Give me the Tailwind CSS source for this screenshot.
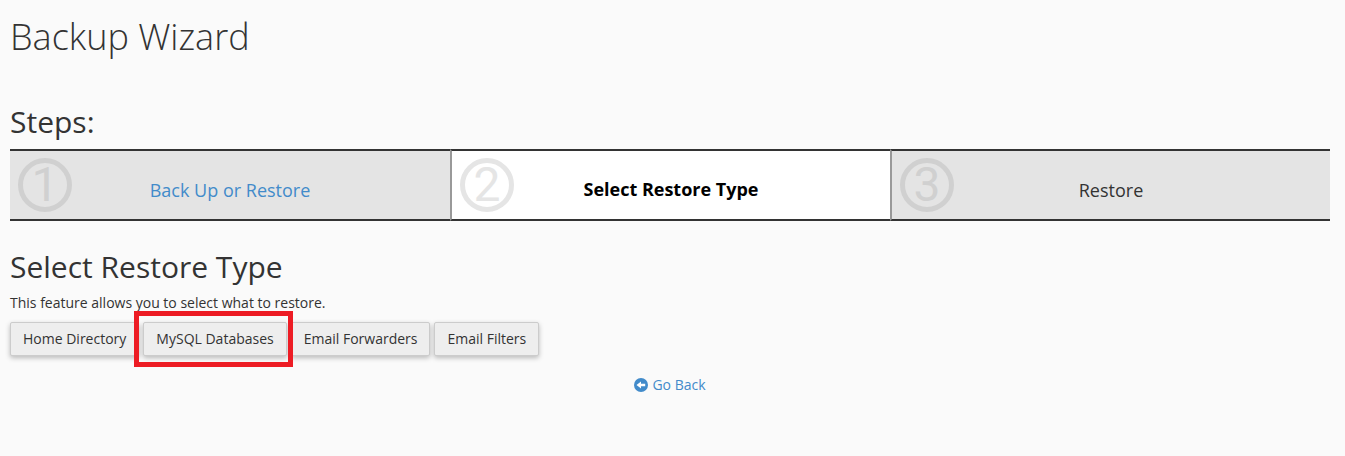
<!DOCTYPE html>
<html lang="en">
<head>
<meta charset="utf-8">
<meta name="viewport" content="width=device-width, initial-scale=1">
<title>Backup Wizard</title>
<script src="https://cdn.jsdelivr.net/npm/@tailwindcss/browser@4"></script>
</head>
<body class="min-h-screen bg-[#fafafa] pl-[10px] pr-[15px] pt-[17px] font-['Open_Sans',sans-serif] text-sm text-[#333]">
<main>
  <h1 class="text-[36px] leading-10 font-light">Backup Wizard</h1>

  <h2 class="mt-[47px] text-[30px] leading-9">Steps:</h2>
  <ol class="mt-[9px] grid grid-cols-3 text-lg leading-6">
    <li class="relative flex h-[72px] items-center justify-center border-y-2 border-[#333] bg-[#e4e4e4] pt-[10px]">
      <span aria-hidden="true" class="absolute left-2 top-[7px] flex size-[54px] items-center justify-center rounded-full border-5 border-[#d0d0d0] font-[Roboto,sans-serif] text-5xl text-[#d0d0d0]">1</span>
      <a href="#" class="text-[#428bca]">Back Up or Restore</a>
    </li>
    <li aria-current="step" class="relative flex h-[72px] items-center justify-center border-y-2 border-l-2 border-y-[#333] border-l-[#999] bg-white pt-2">
      <span aria-hidden="true" class="absolute left-2 top-[7px] flex size-[54px] items-center justify-center rounded-full border-5 border-[#e5e5e5] font-[Roboto,sans-serif] text-5xl text-[#e5e5e5]">2</span>
      <span class="font-bold text-black">Select Restore Type</span>
    </li>
    <li class="relative flex h-[72px] items-center justify-center border-y-2 border-l-2 border-y-[#333] border-l-[#999] bg-[#e4e4e4] pt-[10px]">
      <span aria-hidden="true" class="absolute left-2 top-[7px] flex size-[54px] items-center justify-center rounded-full border-5 border-[#d0d0d0] font-[Roboto,sans-serif] text-5xl text-[#d0d0d0]">3</span>
      <span>Restore</span>
    </li>
  </ol>

  <h2 class="mt-7 text-[30px] leading-9">Select Restore Type</h2>
  <p class="mt-2 leading-5">This feature allows you to select what to restore.</p>
  <div class="mt-[9px] flex gap-1">
    <button type="button" class="h-[34px] rounded-xs border border-[#ccc] bg-[#eee] px-3 shadow-[0_2px_5px_rgba(0,0,0,0.26)]">Home Directory</button>
    <div class="relative">
      <button type="button" class="h-[34px] rounded-xs border border-[#ccc] bg-[#eee] px-3 shadow-[0_2px_5px_rgba(0,0,0,0.26)]">MySQL Databases</button>
      <span aria-hidden="true" class="pointer-events-none absolute -left-[9px] -right-[6px] -top-[11px] -bottom-[11px] z-10 border-5 border-[#ed1c24]"></span>
    </div>
    <button type="button" class="h-[34px] rounded-xs border border-[#ccc] bg-[#eee] px-3 shadow-[0_2px_5px_rgba(0,0,0,0.26)]">Email Forwarders</button>
    <button type="button" class="h-[34px] rounded-xs border border-[#ccc] bg-[#eee] px-3 shadow-[0_2px_5px_rgba(0,0,0,0.26)]">Email Filters</button>
  </div>

  <div class="mt-[19px] flex justify-center">
    <a href="#" class="flex items-center gap-1 leading-5 text-[#428bca]">
      <svg class="size-[14px]" viewBox="0 0 14 14" aria-hidden="true"><circle cx="7" cy="7" r="7" fill="#428bca"/><path d="M2.5 7 7 3.4V5.7h4.2v2.6H7v2.3z" fill="#fff"/></svg>
      Go Back
    </a>
  </div>
</main>
</body>
</html>
